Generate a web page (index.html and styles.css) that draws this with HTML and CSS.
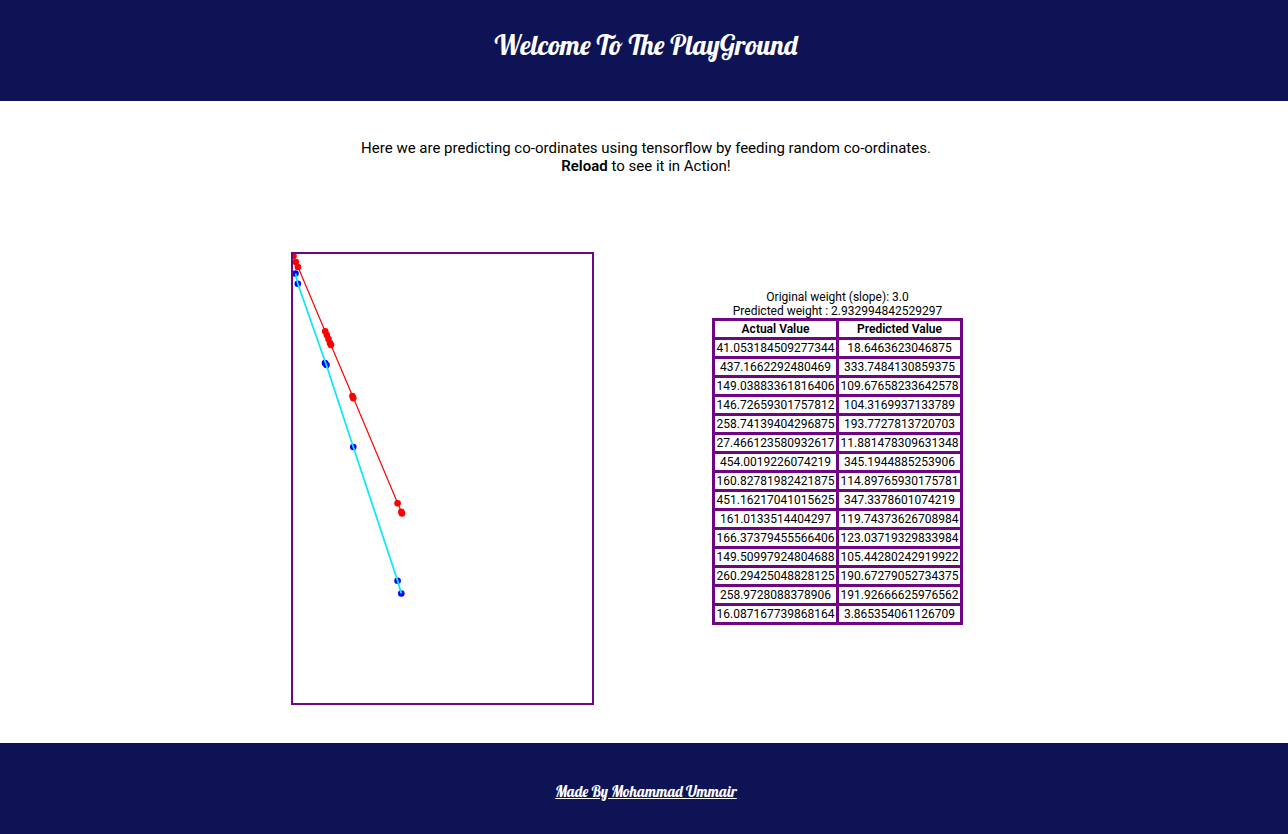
FILE: index.html
```html
<!DOCTYPE html>
<html lang="en">
<head>
<meta charset="utf-8">
<meta name="viewport" content="width=device-width, initial-scale=1">
<title>PlayGround</title>
<link rel="stylesheet" href="styles.css">
</head>
<body>
<header class="banner">
  <h1 class="title">Welcome To The PlayGround</h1>
</header>
<main class="content">
  <p class="intro">Here we are predicting co-ordinates using tensorflow by feeding random co-ordinates.<br><b>Reload</b> to see it in Action!</p>
  <div class="results">
    <svg class="plot" viewBox="293 254 299 449" role="img" aria-label="Actual and predicted lines">
      <g fill="#0000ff">
        <circle cx="295.500" cy="273.500" r="3.300"/>
        <circle cx="297.800" cy="283.700" r="3.300"/>
        <circle cx="325" cy="363" r="3.300"/>
        <circle cx="326.500" cy="365" r="3.300"/>
        <circle cx="353.300" cy="447" r="3.300"/>
        <circle cx="397.600" cy="580.800" r="3.300"/>
        <circle cx="401.300" cy="593.500" r="3.300"/>
      </g>
      <path d="M295.500 273.500L297.800 283.700L326 364L353.300 447L397.600 580.800L401.300 593.500" fill="none" stroke="#14e6fa" stroke-width="1.800"/>
      <path d="M293 256L296 262L298 267L325 331L353 397L397.600 503L402 513" fill="none" stroke="#ff0000" stroke-width="1.200"/>
      <g fill="#ff0000">
        <circle cx="293.500" cy="256" r="3.300"/>
        <circle cx="295.800" cy="262" r="3.300"/>
        <circle cx="297.900" cy="267" r="3.300"/>
        <circle cx="325.200" cy="331.300" r="3.300"/>
        <circle cx="326.800" cy="335" r="3.300"/>
        <circle cx="328.500" cy="339" r="3.300"/>
        <circle cx="330" cy="343" r="3.300"/>
        <circle cx="331" cy="345" r="3.300"/>
        <circle cx="352.400" cy="396" r="3.300"/>
        <circle cx="353.300" cy="398.300" r="3.300"/>
        <circle cx="397.600" cy="503.300" r="3.300"/>
        <circle cx="401.300" cy="511.800" r="3.300"/>
        <circle cx="402" cy="513.500" r="3.300"/>
      </g>
    </svg>
    <div class="summary">
      <div>Original weight (slope): 3.0</div>
      <div>Predicted weight : 2.932994842529297</div>
      <table class="values">
        <thead><tr><th scope="col">Actual Value</th><th scope="col">Predicted Value</th></tr></thead>
        <tbody>
          <tr><td>41.053184509277344</td><td>18.6463623046875</td></tr>
          <tr><td>437.1662292480469</td><td>333.7484130859375</td></tr>
          <tr><td>149.03883361816406</td><td>109.67658233642578</td></tr>
          <tr><td>146.72659301757812</td><td>104.3169937133789</td></tr>
          <tr><td>258.74139404296875</td><td>193.7727813720703</td></tr>
          <tr><td>27.466123580932617</td><td>11.881478309631348</td></tr>
          <tr><td>454.0019226074219</td><td>345.1944885253906</td></tr>
          <tr><td>160.82781982421875</td><td>114.89765930175781</td></tr>
          <tr><td>451.16217041015625</td><td>347.3378601074219</td></tr>
          <tr><td>161.0133514404297</td><td>119.74373626708984</td></tr>
          <tr><td>166.37379455566406</td><td>123.03719329833984</td></tr>
          <tr><td>149.50997924804688</td><td>105.44280242919922</td></tr>
          <tr><td>260.29425048828125</td><td>190.67279052734375</td></tr>
          <tr><td>258.9728088378906</td><td>191.92666625976562</td></tr>
          <tr><td>16.087167739868164</td><td>3.865354061126709</td></tr>
        </tbody>
      </table>
    </div>
  </div>
</main>
<footer class="footer">
  <a class="credit" href="#">Made By Mohammad Ummair</a>
</footer>
</body>
</html>
```
FILE: styles.css
```css
* {
  box-sizing: border-box;
}

body {
  display: flex;
  flex-direction: column;
  min-height: 100vh;
  margin: 0;
  background: #fff;
  color: #000;
  font: 400 15px/18px Roboto, sans-serif;
  text-align: center;
}

.banner {
  padding: 27px 16px 38px 20px;
  background: #0e1355;
  color: #fff;
}

.title {
  margin: 0;
  font: 400 27px/36px Lobster, "Liberation Serif", serif;
}

.content {
  flex: 1;
  padding: 38px 0;
}

.intro {
  margin: 0;
  padding: 0 16px 0 20px;
}

.intro b {
  font-weight: 600;
}

.results {
  display: flex;
  flex-wrap: wrap;
  align-items: center;
  justify-content: center;
  gap: 32px 118px;
  margin-top: 77px;
  padding-right: 34px;
}

.plot {
  width: 303px;
  height: 453px;
  border: 2px solid #6f0484;
}

.summary {
  padding-bottom: 42px;
  font-size: 12px;
  line-height: 14px;
}

.values {
  min-width: 251px;
  border-collapse: collapse;
}

.values th,
.values td {
  padding: 1px;
  border: 3px solid #6f0484;
}

.values th {
  font-weight: 600;
}

.footer {
  padding: 39px 16px 32px 20px;
  background: #0e1355;
}

.credit {
  color: #fff;
  font: 400 15px/20px Lobster, "Liberation Serif", serif;
}
```
